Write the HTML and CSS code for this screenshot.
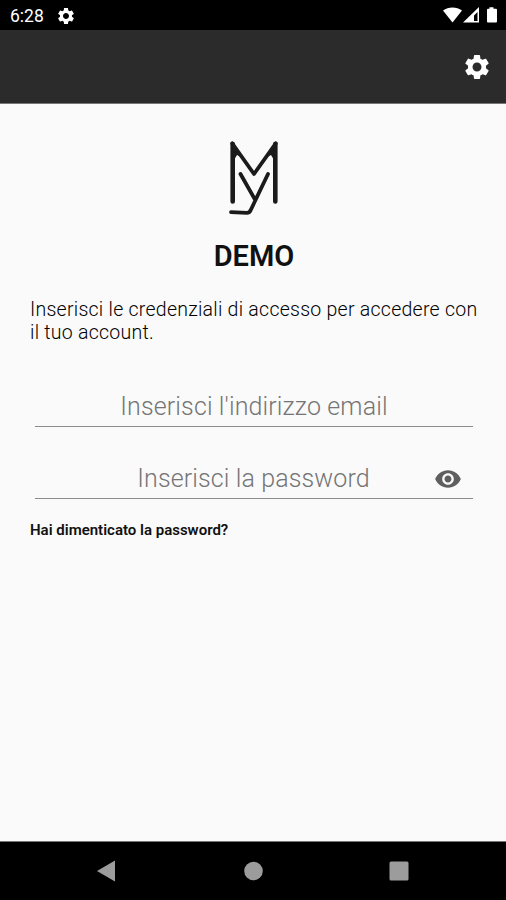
FILE: index.html
```
<!DOCTYPE html>
<html lang="it">
<head>
    <meta charset="UTF-8">
    <meta name="viewport" content="width=device-width, initial-scale=1.0">
    <title>Demo - Accesso</title>
    <link rel="stylesheet" href="styles.css">
</head>
<body>
    <svg class="defs" width="0" height="0">
        <symbol id="gear" viewBox="0 0 24 24">
            <path d="M19.14 12.94c.04-.3.06-.61.06-.94 0-.32-.02-.64-.07-.94l2.03-1.58c.18-.14.23-.41.12-.61l-1.92-3.32c-.12-.22-.37-.29-.59-.22l-2.39.96c-.5-.38-1.03-.7-1.62-.94l-.36-2.54c-.04-.24-.24-.41-.48-.41h-3.84c-.24 0-.43.17-.47.41l-.36 2.54c-.59.24-1.13.57-1.62.94l-2.39-.96c-.22-.08-.47 0-.59.22L2.74 8.87c-.12.21-.08.47.12.61l2.03 1.58c-.05.3-.09.63-.09.94s.02.64.07.94l-2.03 1.58c-.18.14-.23.41-.12.61l1.92 3.32c.12.22.37.29.59.22l2.39-.96c.5.38 1.03.7 1.62.94l.36 2.54c.05.24.24.41.48.41h3.84c.24 0 .44-.17.47-.41l.36-2.54c.59-.24 1.13-.56 1.62-.94l2.39.96c.22.08.47 0 .59-.22l1.92-3.32c.12-.22.07-.47-.12-.61l-2.01-1.58zM12 15.6c-1.98 0-3.6-1.62-3.6-3.6s1.62-3.6 3.6-3.6 3.6 1.62 3.6 3.6-1.62 3.6-3.6 3.6z"/>
        </symbol>
    </svg>

    <div class="status-bar">
        <span class="time">6:28</span>
        <svg class="status-gear"><use href="#gear"/></svg>
        <svg class="status-icons" width="56" height="18" viewBox="0 0 56 18">
            <path d="M1 4.600C6.400.500 14.600.500 20 4.600L10.500 16.500z"/>
            <path fill-rule="evenodd" d="M37 1v15.500H21zM35.500 6L32 9.500V15h3.500z"/>
            <path d="M47.500 1.200h4v1.500h2.500q1 0 1 1V15.500q0 1-1 1h-8q-1 0-1-1V3.700q0-1 1-1h1.500z"/>
        </svg>
    </div>

    <header class="toolbar">
        <button class="icon-button" aria-label="Impostazioni">
            <svg class="toolbar-gear"><use href="#gear"/></svg>
        </button>
    </header>

    <main class="login">
        <svg class="logo" width="50" height="76" viewBox="0 0 50 76">
            <path class="stem" d="M3.700 3v57.500M46.300 3v57.500"/>
            <path class="corner" d="M3 2L14 17 8 14 5 19zM47 2L36 17l6-3 3 5z"/>
            <path class="stroke" d="M3.200 2.300L25 33 46.800 2.300M11.500 33L26 58.500M39 33L21.500 69.500q-1.200 2.300-3.500 2.300L2 71.200"/>
        </svg>
        <h1>DEMO</h1>
        <p class="intro">Inserisci le credenziali di accesso per accedere con il tuo account.</p>
        <div class="field">
            <input type="email" placeholder="Inserisci l'indirizzo email">
        </div>
        <div class="field field-password">
            <input type="password" placeholder="Inserisci la password">
            <svg class="eye" viewBox="0 0 24 24">
                <path d="M12 4.500C7 4.500 2.730 7.610 1 12c1.730 4.390 6 7.500 11 7.500s9.270-3.110 11-7.500c-1.730-4.390-6-7.500-11-7.500zM12 17c-2.760 0-5-2.240-5-5s2.240-5 5-5 5 2.240 5 5-2.240 5-5 5zm0-8c-1.660 0-3 1.340-3 3s1.340 3 3 3 3-1.340 3-3-1.340-3-3-3z"/>
            </svg>
        </div>
        <a class="forgot">Hai dimenticato la password?</a>
    </main>

    <nav class="nav-bar">
        <svg width="20" height="22" viewBox="0 0 20 22"><path d="M1 11L19 .500v21z"/></svg>
        <svg width="20" height="22" viewBox="0 0 20 22"><circle cx="10.500" cy="11" r="9.300"/></svg>
        <svg width="20" height="22" viewBox="0 0 20 22"><rect x=".500" y="1.500" width="19" height="19" rx="1.500"/></svg>
    </nav>
</body>
</html>
```
FILE: styles.css
```
* {
    box-sizing: border-box;
}
body {
    margin: 0;
    height: 900px;
    display: flex;
    flex-direction: column;
    overflow: hidden;
    font-family: Roboto, "Liberation Sans", sans-serif;
    background-color: #fafafa;
    color: #111;
}
svg {
    display: block;
    flex-shrink: 0;
}
.defs {
    position: absolute;
}
.status-bar {
    height: 30px;
    padding: 0 8px 0 10px;
    display: flex;
    align-items: center;
    background-color: #000;
    color: #fff;
    fill: #fff;
}
.time {
    width: 46px;
    padding-top: 2px;
    font-size: 17.5px;
}
.status-gear {
    width: 20px;
    height: 20px;
    margin-top: 1px;
}
.status-icons {
    margin-left: auto;
}
.toolbar {
    height: 74px;
    padding: 0 14px;
    display: flex;
    align-items: center;
    justify-content: flex-end;
    background-color: #2b2b2b;
    border-bottom: 1px solid #777;
}
.icon-button {
    padding: 0;
    border: none;
    background: none;
}
.toolbar-gear {
    width: 30px;
    height: 30px;
    fill: #fff;
}
.login {
    flex: 1;
    padding: 37px 25px 0 30px;
    display: flex;
    flex-direction: column;
}
.logo {
    align-self: center;
    margin-right: 4px;
    fill: none;
    stroke: #1b1b1b;
    stroke-linecap: round;
    stroke-linejoin: round;
}
.stem {
    stroke-width: 4.6;
}
.stroke {
    stroke-width: 3.8;
}
.corner {
    fill: #1b1b1b;
    stroke: none;
}
h1 {
    margin: 22px 3px 0 0;
    font-size: 29px;
    line-height: 34px;
    font-weight: 600;
    text-align: center;
}
.intro {
    margin: 25px -5px 0 0;
    font-size: 19.5px;
    line-height: 23px;
    letter-spacing: 0.26px;
    font-weight: 300;
    color: #000;
}
.field {
    height: 44px;
    margin: 39px 8px 0 5px;
    display: flex;
    align-items: center;
    border-bottom: 1.5px solid #8c8c8c;
}
.field-password {
    margin-top: 28px;
}
.field input {
    flex: 1;
    min-width: 0;
    padding: 3px 0 0;
    border: none;
    outline: none;
    background: none;
    font-family: inherit;
    font-size: 25px;
    font-weight: 300;
    letter-spacing: 0.12px;
    text-align: center;
}
.field input::placeholder {
    color: #757575;
}
.field-password input {
    padding-left: 38px;
}
.eye {
    width: 28px;
    height: 28px;
    margin-right: 11px;
    margin-top: 5px;
    fill: #5f5f5f;
}
.forgot {
    margin-top: 22px;
    font-size: 15px;
    line-height: 18px;
    font-weight: 600;
}
.nav-bar {
    height: 59px;
    padding: 0 97px 0 96px;
    display: flex;
    align-items: center;
    justify-content: space-between;
    background-color: #000;
    border-top: 1px solid #777;
    fill: #9c9c9c;
}
```
